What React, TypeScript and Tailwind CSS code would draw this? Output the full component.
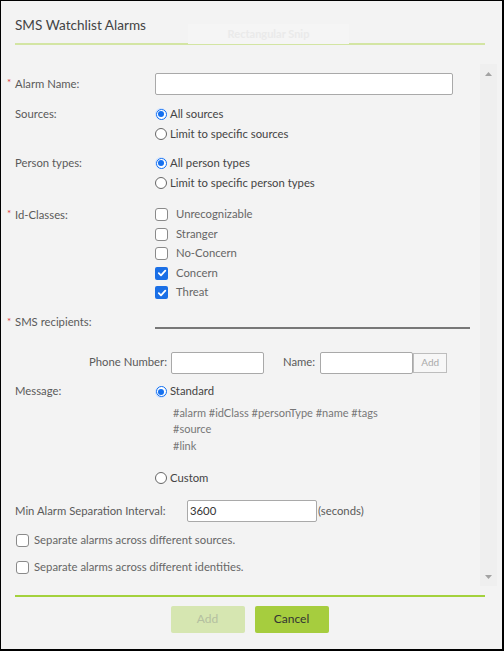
import React from "react";

const FONT = "font-['Lato','Open_Sans',sans-serif]";

const Radio = ({ checked }: { checked: boolean }) =>
  checked ? (
    <span className="w-[12px] h-[12px] rounded-full bg-[#cfe2ff] flex items-center justify-center shrink-0">
      <span className="w-[11px] h-[11px] rounded-full border-[1.5px] border-[#1570ef] bg-white flex items-center justify-center">
        <span className="w-[6px] h-[6px] rounded-full bg-[#1570ef]" />
      </span>
    </span>
  ) : (
    <span className="w-[12px] h-[12px] rounded-full border border-[#666] bg-white shrink-0" />
  );

const Check = ({ checked }: { checked: boolean }) =>
  checked ? (
    <span className="w-[13px] h-[13px] rounded-[2px] bg-[#1a6fe6] flex items-center justify-center shrink-0">
      <svg width="10" height="10" viewBox="0 0 10 10">
        <path d="M1.8 5.2 L4 7.3 L8.3 2.6" stroke="white" strokeWidth="1.8" fill="none" strokeLinecap="round" strokeLinejoin="round" />
      </svg>
    </span>
  ) : (
    <span className="w-[13px] h-[13px] rounded-[3px] border border-[#8a8a8a] bg-white shrink-0" />
  );

const Label = ({ text, required }: { text: string; required?: boolean }) => (
  <div className="w-[140px] shrink-0 relative text-[#5a5a5a]">
    {required && <span className="absolute left-[-8px] top-[-1px] text-[#e23b3b] text-[10px]">*</span>}
    {text}
  </div>
);

export default function App() {
  const idClasses: [string, boolean][] = [
    ["Unrecognizable", false],
    ["Stranger", false],
    ["No-Concern", false],
    ["Concern", true],
    ["Threat", true],
  ];

  return (
    <div className={`w-[504px] h-[651px] bg-[#f3f3f3] border-t border-l border-r-2 border-b-2 border-black relative flex flex-col text-[11.3px] ${FONT}`}>
      {/* Header */}
      <div className="pt-[16px] px-[14px]">
        <div className="text-[13.6px] leading-[16px] text-[#444]">SMS Watchlist Alarms</div>
        <div className="mt-[10px] mr-[3px] h-[2px] bg-[#d3e5a3]" />
      </div>

      {/* ghost snip overlay */}
      <div className="absolute left-[187px] top-[23px] w-[161px] h-[20px] bg-[#f5f5f5] flex items-center justify-center text-[11px] font-bold text-[#eaeaea]">
        Rectangular Snip
      </div>

      {/* Body */}
      <div className="mt-[19px] h-[522px] flex">
        <div className="flex-1 pl-[14px] flex flex-col">
          <div className="mt-[9px] flex items-center h-[22px]">
            <Label text="Alarm Name:" required />
            <div className="w-[298px] h-[22px] bg-white border border-[#a9a9a9] rounded-[2px]" />
          </div>

          <div className="mt-[9px] flex">
            <div className="leading-[20px]"><Label text="Sources:" /></div>
            <div className="flex flex-col text-[#444]">
              <div className="h-[20px] flex items-center gap-[3px]"><Radio checked />All sources</div>
              <div className="h-[20px] flex items-center gap-[3px]"><Radio checked={false} />Limit to specific sources</div>
            </div>
          </div>

          <div className="mt-[9px] flex">
            <div className="leading-[20px]"><Label text="Person types:" /></div>
            <div className="flex flex-col text-[#444]">
              <div className="h-[20px] flex items-center gap-[3px]"><Radio checked />All person types</div>
              <div className="h-[20px] flex items-center gap-[3px]"><Radio checked={false} />Limit to specific person types</div>
            </div>
          </div>

          <div className="mt-[12px] flex">
            <div className="leading-[19.5px]"><Label text="Id-Classes:" required /></div>
            <div className="flex flex-col text-[#666]">
              {idClasses.map(([name, on]) => (
                <div key={name} className="h-[19.5px] flex items-center gap-[8px]">
                  <Check checked={on} />
                  {name}
                </div>
              ))}
            </div>
          </div>

          <div className="mt-[11px] flex h-[16px] leading-[16px]">
            <Label text="SMS recipients:" required />
            <div className="flex items-end pb-[1px]">
              <div className="w-[315px] h-[2px] bg-[#777]" />
            </div>
          </div>

          <div className="mt-[22px] flex items-center h-[22px] text-[#5a5a5a]">
            <div className="w-[152px] text-right">Phone Number:</div>
            <div className="ml-[4px] w-[93px] h-[22px] bg-white border border-[#a9a9a9] rounded-[2px]" />
            <div className="ml-[19px]">Name:</div>
            <div className="ml-[5px] w-[93px] h-[22px] bg-white border border-[#a9a9a9] rounded-[2px]" />
            <div className="w-[34px] h-[20px] bg-[#f7f7f7] border border-[#bdbdbd] flex items-center justify-center text-[10px] text-[#aaa]">
              Add
            </div>
          </div>

          <div className="mt-[8px] flex h-[20px] items-center">
            <Label text="Message:" />
            <div className="flex items-center gap-[3px] text-[#444]"><Radio checked />Standard</div>
          </div>

          <div className="mt-[3px] pl-[158px] text-[11px] leading-[16.5px] text-[#777]">
            <div>#alarm #idClass #personType #name #tags</div>
            <div>#source</div>
            <div>#link</div>
          </div>

          <div className="mt-[14px] pl-[140px] h-[20px] flex items-center gap-[3px] text-[#444]">
            <Radio checked={false} />Custom
          </div>

          <div className="mt-[12px] flex items-center h-[22px] text-[#5a5a5a]">
            <div className="w-[172px] shrink-0">Min Alarm Separation Interval:</div>
            <div className="w-[130px] h-[22px] bg-white border border-[#a9a9a9] rounded-[2px] flex items-center pl-[2px] text-[#333]">
              3600
            </div>
            <div className="ml-[1px]">(seconds)</div>
          </div>

          <div className="mt-[9px] pl-[1px] h-[19px] flex items-center gap-[5px] text-[#666]">
            <Check checked={false} />Separate alarms across different sources.
          </div>
          <div className="mt-[8px] pl-[1px] h-[19px] flex items-center gap-[5px] text-[#666]">
            <Check checked={false} />Separate alarms across different identities.
          </div>
        </div>

        {/* scrollbar */}
        <div className="w-[17px] mr-[5px] bg-[#efefef] flex flex-col items-center justify-between pt-[8px] pb-[7px]">
          <svg width="7" height="4" viewBox="0 0 7 4"><path d="M0 4 L3.5 0 L7 4 Z" fill="#a3a3a3" /></svg>
          <svg width="7" height="4" viewBox="0 0 7 4"><path d="M0 0 L3.5 4 L7 0 Z" fill="#a3a3a3" /></svg>
        </div>
      </div>

      {/* Footer */}
      <div className="mt-[9px] mx-[14px] mr-[17px] h-[1.5px] bg-[#a3d13c]" />
      <div className="mt-[9px] pr-[4px] flex justify-center gap-[10px] text-[12px]">
        <div className="w-[74px] h-[27px] bg-[#d6e6b1] rounded-[2px] flex items-center justify-center text-[#b4bfa0]">Add</div>
        <div className="w-[74px] h-[27px] bg-[#a6cd3e] rounded-[2px] flex items-center justify-center text-[#333]">Cancel</div>
      </div>
    </div>
  );
}
